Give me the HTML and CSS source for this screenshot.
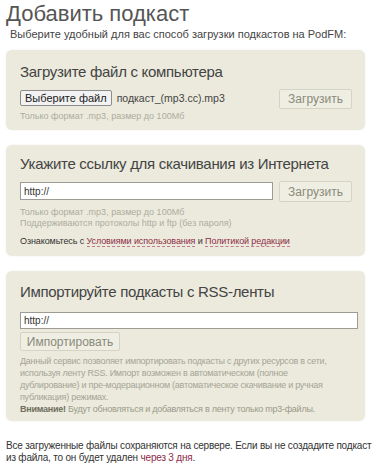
FILE: index.html
```html
<!DOCTYPE html>
<html lang="ru">
  <head>
    <meta charset="UTF-8" />
    <title>Добавить подкаст</title>
    <link rel="stylesheet" href="styles.css">
  </head>
  <body>
    <div class="page">
      <h1>Добавить подкаст</h1>
      <p class="lead">Выберите удобный для вас способ загрузки подкастов на PodFM:</p>

      <!-- С компьютера -->
      <div class="box box-file">
        <h2>Загрузите файл с компьютера</h2>
        <div class="row">
          <div class="file-pick">
            <button class="file-btn">Выберите файл</button>
            <span class="file-name">подкаст_(mp3.cc).mp3</span>
          </div>
          <button class="btn btn-tall">Загрузить</button>
        </div>
        <p class="hint">Только формат .mp3, размер до 100Мб</p>
      </div>

      <!-- По ссылке -->
      <div class="box box-url">
        <h2>Укажите ссылку для скачивания из Интернета</h2>
        <div class="row">
          <input type="text" class="field field-url" value="http://" />
          <button class="btn btn-tall">Загрузить</button>
        </div>
        <p class="hint">Только формат .mp3, размер до 100Мб<br />Поддерживаются протоколы http и ftp (без пароля)</p>
        <p class="terms">Ознакомьтесь с <a href="#">Условиями использования</a> и <a href="#">Политикой редакции</a></p>
      </div>

      <!-- RSS -->
      <div class="box box-rss">
        <h2>Импортируйте подкасты с RSS-ленты</h2>
        <input type="text" class="field field-rss" value="http://" />
        <button class="btn btn-import">Импортировать</button>
        <p class="hint">Данный сервис позволяет импортировать подкасты с других ресурсов в сети,<br />используя ленту RSS. Импорт возможен в автоматическом (полное<br />дублирование) и пре-модерационном (автоматическое скачивание и ручная<br />публикация) режимах.<br /><span class="warn"><b>Внимание!</b> Будут обновляться и добавляться в ленту только mp3-файлы.</span></p>
      </div>

      <p class="note">Все загруженные файлы сохраняются на сервере. Если вы не создадите подкаст<br />из файла, то он будет удален <span class="days">через 3 дня</span>.</p>
    </div>
  </body>
</html>
```

FILE: styles.css
```css
* {
  box-sizing: border-box;
}

body {
  margin: 0;
  background: #fff;
  font-family: "Liberation Sans", Arial, sans-serif;
  color: #333;
}

.page {
  padding: 0 7px 0 6px;
}

h1 {
  margin: 0;
  padding-top: 1px;
  font-size: 22px;
  font-weight: normal;
  color: #555;
  line-height: 26px;
}

.lead {
  margin: 0 0 0 4px;
  font-size: 11px;
  line-height: 14px;
  color: #444;
}

.box {
  background: #ebeadc;
  border-radius: 6px;
  box-shadow: 0 0 2px rgba(0, 0, 0, 0.08);
  padding: 12px 13px 8px 14px;
  margin-top: 15px;
}

.box-file {
  margin-top: 9px;
}

h2 {
  margin: 0;
  font-size: 15px;
  letter-spacing: -0.3px;
  font-weight: normal;
  color: #444;
  line-height: 20px;
  white-space: nowrap;
}

.row {
  display: flex;
  justify-content: space-between;
  align-items: flex-start;
  margin-top: 7px;
  gap: 6px;
}

.file-pick {
  display: flex;
  align-items: center;
  gap: 5px;
  padding-top: 1px;
}

.file-btn {
  font-family: "Liberation Sans", Arial, sans-serif;
  font-size: 11px;
  padding: 1px 4px;
  height: 16px;
  line-height: 12px;
  background: #f2f2f2;
  border: 1px solid #8c8c8c;
  border-radius: 2px;
  color: #222;
}

.file-name {
  font-size: 10.5px;
  color: #444;
}

.btn {
  font-family: "Liberation Sans", Arial, sans-serif;
  font-size: 12px;
  color: #8a8a7a;
  background: #efeee3;
  border: 1px solid #d5d4c4;
  border-radius: 2px;
  cursor: pointer;
  padding: 0;
}

.btn-tall {
  width: 73px;
  height: 20px;
  flex-shrink: 0;
}

.hint {
  margin: 2px 0 0;
  font-size: 9px;
  line-height: 11px;
  color: #aeac9e;
}

.field {
  font-family: "Liberation Sans", Arial, sans-serif;
  font-size: 10px;
  color: #333;
  border: 1px solid #9c9c94;
  background: #fff;
  padding: 0 3px;
  height: 18px;
}

.box-url {
  padding-top: 9px;
}

.field-url {
  width: 254px;
  margin-top: 1px;
}

.box-url .btn-tall {
  height: 21px;
}

.box-url .hint {
  margin-top: 5px;
}

.terms {
  margin: 6px 0 0;
  font-size: 9px;
  letter-spacing: -0.1px;
  line-height: 13px;
  color: #333;
}

.terms a {
  color: #8e2c48;
  text-decoration: none;
  border-bottom: 1px dashed #c47a8e;
}

.box-rss {
  padding: 11px 7px 6px 14px;
}

.field-rss {
  display: block;
  width: 338px;
  height: 17px;
  margin-top: 10px;
}

.btn-import {
  display: block;
  margin-top: 3px;
  width: 100px;
  height: 19px;
}

.box-rss .hint {
  margin-top: 4px;
  font-size: 9px;
  letter-spacing: -0.25px;
  line-height: 12px;
  white-space: nowrap;
  color: #a6a496;
}

.warn {
  color: #9a9a8a;
}

.warn b {
  color: #6f6e60;
}

.note {
  margin: 19px 0 0;
  font-size: 10px;
  letter-spacing: -0.2px;
  line-height: 12px;
  color: #333;
  white-space: nowrap;
}

.days {
  color: #8e2c48;
}
```
